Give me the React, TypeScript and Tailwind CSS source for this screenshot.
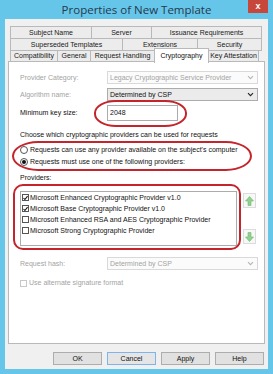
import React from 'react';

const tabRows = [
  [
    { label: 'Subject Name', w: 'w-[82px]' },
    { label: 'Server', w: 'w-[61px]' },
    { label: 'Issuance Requirements', w: 'w-[111px]' },
  ],
  [
    { label: 'Superseded Templates', w: 'w-[113px]' },
    { label: 'Extensions', w: 'w-[76px]' },
    { label: 'Security', w: 'w-[65px]' },
  ],
];

const lastRow = [
  { label: 'Compatibility', w: 'w-[48px]' },
  { label: 'General', w: 'w-[34px]' },
  { label: 'Request Handling', w: 'w-[65px]' },
  { label: 'Cryptography', w: 'w-[55px]', active: true },
  { label: 'Key Attestation', w: 'w-[51px]' },
];

const providers = [
  { name: 'Microsoft Enhanced Cryptographic Provider v1.0', checked: true },
  { name: 'Microsoft Base Cryptographic Provider v1.0', checked: true },
  { name: 'Microsoft Enhanced RSA and AES Cryptographic Provider', checked: false },
  { name: 'Microsoft Strong Cryptographic Provider', checked: false },
];

function Chevron({ color }: { color: string }) {
  return (
    <svg width="7" height="5" viewBox="0 0 7 5" className="shrink-0">
      <path d="M1 1.2 L3.5 3.7 L6 1.2" fill="none" stroke={color} strokeWidth="1.1" />
    </svg>
  );
}

function Combo({ text, disabled }: { text: string; disabled?: boolean }) {
  return (
    <div
      className={
        disabled
          ? 'w-[151px] h-[13px] border border-[#d9d9d9] bg-[#fbfbfb] flex items-center justify-between pl-[2px] pr-[3px] text-[#a3a3a3]'
          : 'w-[151px] h-[13px] border border-[#acacac] bg-[#ebebeb] flex items-center justify-between pl-[2px] pr-[3px] text-[#111]'
      }
    >
      <span>{text}</span>
      <Chevron color={disabled ? '#b5b5b5' : '#222'} />
    </div>
  );
}

function Check({ checked, disabled }: { checked?: boolean; disabled?: boolean }) {
  return (
    <div
      className={
        disabled
          ? 'w-[7px] h-[7px] border border-[#c8c8c8] bg-white shrink-0'
          : 'w-[7px] h-[7px] border border-[#555] bg-white shrink-0 flex items-center justify-center'
      }
    >
      {checked && (
        <svg width="6" height="6" viewBox="0 0 6 6">
          <path d="M0.6 3 L2.3 4.8 L5.5 0.8" fill="none" stroke="#111" strokeWidth="1.3" />
        </svg>
      )}
    </div>
  );
}

function Radio({ checked }: { checked?: boolean }) {
  return (
    <div className="w-[8px] h-[8px] rounded-full border border-[#555] bg-white shrink-0 flex items-center justify-center">
      {checked && <div className="w-[4px] h-[4px] rounded-full bg-[#111]" />}
    </div>
  );
}

function ArrowBtn({ down }: { down?: boolean }) {
  return (
    <div className="w-[13px] h-[15px] border border-[#dcdcdc] bg-[#f7f7f7] flex items-center justify-center">
      <svg width="9" height="10" viewBox="0 0 9 10" className={down ? 'rotate-180' : ''}>
        <path d="M4.5 0.5 L8.5 5 L6 5 L6 9.5 L3 9.5 L3 5 L0.5 5 Z" fill="#8fd18f" stroke="#6dbb6d" strokeWidth="0.6" />
      </svg>
    </div>
  );
}

export default function App() {
  return (
    <div className="relative w-[273px] h-[374px] bg-[#65c6ea] flex flex-col font-['Liberation_Sans',Arial,sans-serif] text-[7px] leading-[10px] text-[#111] overflow-hidden">
      {/* title bar */}
      <div className="h-[19px] shrink-0 relative flex items-center justify-center">
        <span className="text-[11.5px] leading-[14px] text-[#26394d] font-['Open_Sans',sans-serif]">
          Properties of New Template
        </span>
        <div className="absolute right-[5px] top-0 w-[20px] h-[13px] bg-[#c8473b] flex items-center justify-center">
          <span className="text-white text-[9px] font-bold leading-[9px]">x</span>
        </div>
      </div>

      <div className="mx-[5px] mb-[5px] flex-1 bg-[#f0f0f0] flex flex-col">
        {/* tabs */}
        <div className="pt-[7px] pl-[5px] flex flex-col">
          {tabRows.map((row, i) => (
            <div key={i} className={i === 0 ? 'flex h-[13px]' : 'flex h-[13px] -mt-px'}>
              {row.map((t, j) => (
                <div
                  key={t.label}
                  className={`${t.w} ${j > 0 ? '-ml-px' : ''} h-full border border-[#b9b9b9] bg-[#ececec] flex items-center justify-center text-[#1a1a1a] whitespace-nowrap`}
                >
                  {t.label}
                </div>
              ))}
            </div>
          ))}
          <div className="flex h-[12px] -mt-px items-start">
            {lastRow.map((t, j) =>
              t.active ? (
                <div
                  key={t.label}
                  className={`${t.w} -ml-px -mt-[2px] h-[15px] relative z-10 border border-b-0 border-[#b9b9b9] bg-white flex items-start pt-[2px] justify-center whitespace-nowrap`}
                >
                  {t.label}
                </div>
              ) : (
                <div
                  key={t.label}
                  className={`${t.w} ${j > 0 ? '-ml-px' : ''} h-full border border-[#b9b9b9] bg-[#ececec] flex items-center justify-center text-[#1a1a1a] whitespace-nowrap`}
                >
                  {t.label}
                </div>
              )
            )}
          </div>
        </div>

        {/* panel */}
        <div className="ml-[3px] -mt-px w-[257px] h-[283px] bg-white border border-[#b9b9b9] pl-[11px] pt-[9px] flex flex-col">
          <div className="flex items-center h-[13px]">
            <span className="w-[87px] text-[#a3a3a3]">Provider Category:</span>
            <Combo text="Legacy Cryptographic Service Provider" disabled />
          </div>
          <div className="flex items-center h-[13px] mt-[4px]">
            <span className="w-[87px] text-[#a3a3a3]">Algorithm name:</span>
            <Combo text="Determined by CSP" />
          </div>
          <div className="flex items-center h-[16px] mt-[4px]">
            <span className="w-[87px]">Minimum key size:</span>
            <div className="w-[71px] h-[16px] border border-[#acacac] bg-white flex items-center pl-[2px]">2048</div>
          </div>

          <div className="mt-[9px] h-[10px]">Choose which cryptographic providers can be used for requests</div>
          <div className="mt-[5px] h-[10px] flex items-center gap-[2px]">
            <Radio />
            <span>Requests can use any provider available on the subject's computer</span>
          </div>
          <div className="mt-[2px] h-[10px] flex items-center gap-[2px]">
            <Radio checked />
            <span>Requests must use one of the following providers:</span>
          </div>

          <div className="mt-[6px] h-[10px]">Providers:</div>
          <div className="mt-[8px] flex">
            <div className="w-[217px] h-[55px] border border-[#acacac] bg-white flex flex-col">
              {providers.map((p) => (
                <div key={p.name} className="h-[11px] flex items-center gap-[1px] pl-[1px]">
                  <Check checked={p.checked} />
                  <span className="whitespace-nowrap">{p.name}</span>
                </div>
              ))}
            </div>
            <div className="ml-[6px] flex flex-col pt-[2px]">
              <ArrowBtn />
              <div className="mt-[21px]">
                <ArrowBtn down />
              </div>
            </div>
          </div>

          <div className="flex items-center h-[13px] mt-[11px]">
            <span className="w-[87px] text-[#a3a3a3]">Request hash:</span>
            <Combo text="Determined by CSP" disabled />
          </div>
          <div className="mt-[8px] h-[10px] flex items-center gap-[2px]">
            <Check disabled />
            <span className="text-[#a3a3a3]">Use alternate signature format</span>
          </div>
        </div>

        {/* buttons */}
        <div className="mt-[8px] flex justify-end gap-[5px] pr-[4px]">
          {['OK', 'Cancel', 'Apply', 'Help'].map((b) => (
            <div
              key={b}
              className={
                b === 'Cancel'
                  ? 'w-[49px] h-[13px] border border-[#7eb4ea] bg-[#e5e5e5] flex items-center justify-center'
                  : 'w-[49px] h-[13px] border border-[#adadad] bg-[#e1e1e1] flex items-center justify-center'
              }
            >
              {b}
            </div>
          ))}
        </div>
      </div>

      {/* red annotation marks */}
      <div className="absolute left-[94px] top-[100px] w-[93px] h-[27px] rounded-[22px_/_13px] border-2 border-[#c4242c]" />
      <div className="absolute left-[12px] top-[141px] w-[240px] h-[30px] rounded-[26px_/_15px] border-2 border-[#c4242c]" />
      <div className="absolute left-[13px] top-[184px] w-[228px] h-[66px] rounded-[10px] border-2 border-[#c4242c]" />
    </div>
  );
}
